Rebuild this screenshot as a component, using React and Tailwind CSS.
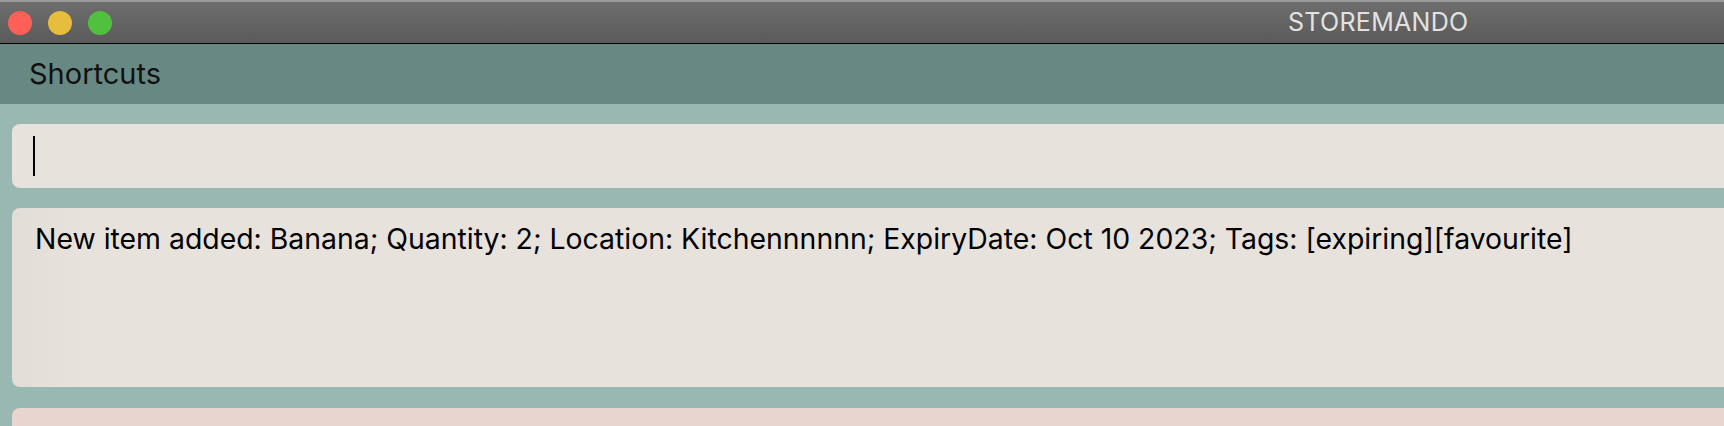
export default function App() {
  const font = { fontFamily: "Inter, 'Liberation Sans', sans-serif" };
  return (
    <div className="h-[426px] w-[1724px] overflow-hidden bg-[#99b8b2]" style={font}>
      {/* title bar */}
      <div className="flex h-[44px] items-center border-t-2 border-b border-t-[#9a9a9a] border-b-black bg-gradient-to-b from-[#6e6e6e] to-[#5a5a5a]">
        <div className="ml-[8px] flex gap-[16px]">
          <span className="h-[24px] w-[24px] rounded-full bg-[#fe5f57]" />
          <span className="h-[24px] w-[24px] rounded-full bg-[#e6bd3c]" />
          <span className="h-[24px] w-[24px] rounded-full bg-[#52c03f]" />
        </div>
        <span className="ml-[1176px] text-[25px] tracking-[0.3px] text-[#e2e2e2]">STOREMANDO</span>
      </div>

      {/* menu bar */}
      <div className="flex h-[60px] items-center bg-[#688983] pl-[29px]">
        <span className="text-[29px] text-[#111]">Shortcuts</span>
      </div>

      <div className="w-[1800px] pl-[12px] pt-[20px]">
        {/* command box */}
        <div className="flex h-[64px] items-center rounded-[8px] bg-[#e8e2dc] pl-[21px]">
          <span className="h-[40px] w-[2px] bg-black" />
        </div>

        {/* result box */}
        <div className="mt-[20px] h-[179px] rounded-[8px] bg-gradient-to-r from-[#e3ddd7] via-[#e8e2dc] via-[4%] to-[#e8e2dc] pl-[23px] pt-[10px]">
          <p className="text-[28.4px] text-black">
            New item added: Banana; Quantity: 2; Location: Kitchennnnnn; ExpiryDate: Oct 10 2023; Tags: [expiring][favourite]
          </p>
        </div>

        {/* list panel */}
        <div className="mt-[21px] h-[40px] rounded-[8px] bg-[#e8d5cf]" />
      </div>
    </div>
  );
}
